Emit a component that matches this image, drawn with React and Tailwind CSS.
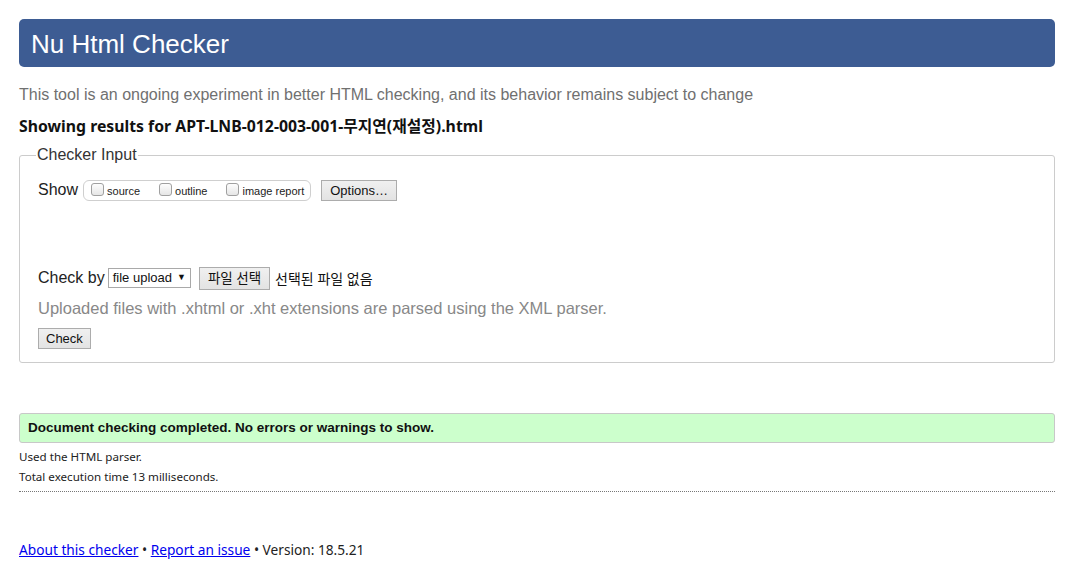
import React from "react";

const arial = "font-['Liberation_Sans',Arial,sans-serif]";
const korean = "font-['Noto_Sans','Noto_Sans_CJK_KR',sans-serif]";

const Box = () => (
    <span className="inline-block w-[13px] h-[13px] border border-[#a0a0a0] rounded-[3px] bg-gradient-to-b from-[#fdfdfd] to-[#e6e6e6] mr-[3px] -mt-[5px]" />
);

const App = () => {
    return (
        <div className={`w-[1074px] min-h-[578px] bg-white px-[19px] pt-[19px] ${arial}`}>
            {/* Header */}
            <h1 className="h-[48px] rounded-[5px] bg-[#3d5c93] text-white text-[26px] leading-[50px] pl-[12px]">
                Nu Html Checker
            </h1>

            <p className="text-[#707070] text-[16px] leading-[20px] mt-[18px]">
                This tool is an ongoing experiment in better HTML checking, and its behavior remains subject to change
            </p>

            <p className={`text-[15.8px] font-bold text-[#111] leading-[20px] mt-[11px] ${korean}`}>
                Showing results for APT-LNB-012-003-001-무지연(재설정).html
            </p>

            {/* Checker input */}
            <fieldset className="border border-[#cccccc] rounded-[3px] mt-[10px] h-[217px] px-[18px]">
                <legend className="text-[16px] text-[#333] px-[1px] -ml-[2px] leading-[18px]">Checker Input</legend>

                <div className="flex items-center mt-[15px] h-[22px]">
                    <span className="text-[16px] text-[#222] mr-[5px]">Show</span>
                    <div className="flex items-center h-[21px] border border-[#cfcfcf] rounded-[6px] pl-[7px] pr-[6px] pt-[3px] text-[11px] text-[#222] gap-[19px]">
                        <label className="flex items-center"><Box />source</label>
                        <label className="flex items-center"><Box />outline</label>
                        <label className="flex items-center"><Box />image report</label>
                    </div>
                    <button className="ml-[10px] h-[21px] px-[8px] border border-[#acacac] bg-gradient-to-b from-[#f0f0f0] to-[#e3e3e3] text-[13px] text-[#111]">
                        Options…
                    </button>
                </div>

                <div className="flex items-center mt-[65px] h-[24px]">
                    <span className="text-[16px] text-[#222] mr-[3px]">Check by</span>
                    <span className="flex items-center h-[20px] border border-[#a9a9a9] bg-white px-[4px] text-[13px] text-[#111] mr-[8px]">
                        file upload <span className="text-[9px] ml-[5px]">▼</span>
                    </span>
                    <button className={`h-[23px] px-[8px] border border-[#acacac] bg-gradient-to-b from-[#f0f0f0] to-[#e3e3e3] text-[13.5px] text-[#111] ${korean}`}>
                        파일 선택
                    </button>
                    <span className={`ml-[5px] text-[14px] text-[#111] ${korean}`}>선택된 파일 없음</span>
                </div>

                <p className="text-[16.5px] text-[#888] mt-[8px] leading-[20px]">
                    Uploaded files with .xhtml or .xht extensions are parsed using the XML parser.
                </p>

                <button className="mt-[10px] h-[21px] px-[7px] border border-[#acacac] bg-gradient-to-b from-[#f0f0f0] to-[#e3e3e3] text-[13px] text-[#111]">
                    Check
                </button>
            </fieldset>

            {/* Result */}
            <div className="mt-[50px] h-[30px] border border-[#c8c8c8] rounded-[3px] bg-[#ccffcc] flex items-center pl-[8px] text-[13.5px] font-bold text-[#111]">
                Document checking completed. No errors or warnings to show.
            </div>

            <div className={`text-[11.6px] text-[#222] mt-[4px] leading-[20px] ${korean}`}>
                <p>Used the HTML parser.</p>
                <p>Total execution time 13 milliseconds.</p>
            </div>
            <div className="border-t border-dotted border-[#777] mt-[4px]" />

            {/* Footer */}
            <p className={`mt-[48px] text-[13.7px] text-[#222] ${korean}`}>
                <a href="#" className="text-[#0000ee] underline">About this checker</a>
                {" • "}
                <a href="#" className="text-[#0000ee] underline">Report an issue</a>
                {" • Version: 18.5.21"}
            </p>
        </div>
    );
};

export default App;
